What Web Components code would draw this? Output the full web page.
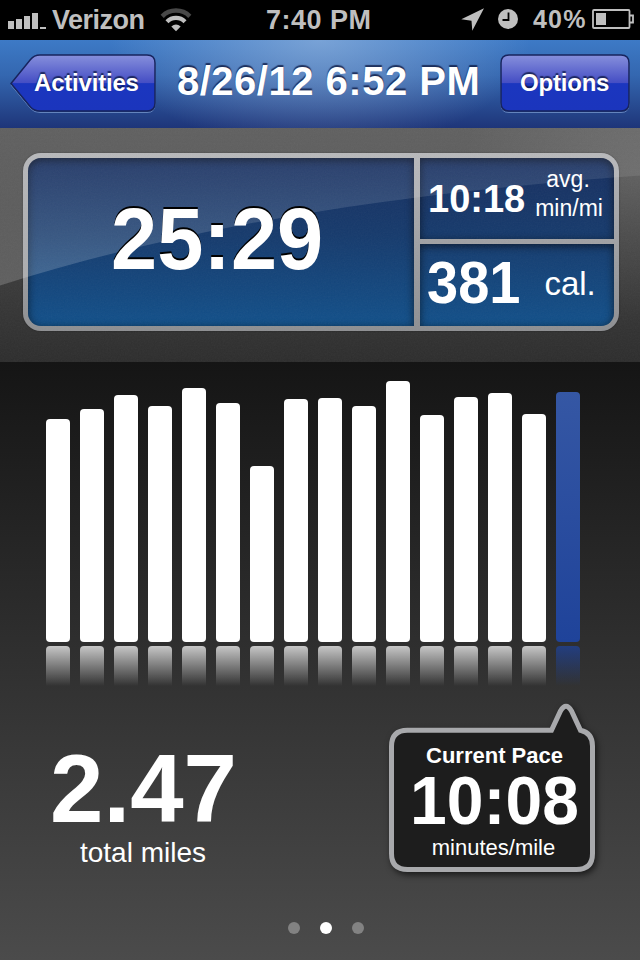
<!DOCTYPE html>
<html lang="en">
<head>
<meta charset="utf-8">
<title>Activity</title>
<style>
  body {
    margin: 0;
    width: 640px;
    height: 960px;
    overflow: hidden;
    background: #000;
    color: #fff;
    font-family: "Liberation Sans", Arial, sans-serif;
  }
</style>
</head>
<body>
<run-app></run-app>

<script>
const define = (name, html, setup) => {
  const template = document.createElement("template")
  template.innerHTML = html

  customElements.define(name, class extends HTMLElement {
    constructor() {
      super()
      this.attachShadow({mode: "open"})
      this.shadowRoot.appendChild(template.content.cloneNode(true))
    }

    connectedCallback() {
      if (setup) setup(this, this.shadowRoot)
    }
  })
}

// one line of text: size, letter spacing, offset from the line above, sideways nudge
// and a vertical stretch that keeps the baseline in place
define("text-line", `
  <style>
    :host {
      display: block;
      white-space: nowrap;
      line-height: 1;
      font-weight: bold;
      position: relative;
      z-index: 2;
      transform-origin: 50% 84.6%;
    }
    :host([light]) { font-weight: normal; }
    :host([engraved]) { text-shadow: 0 -2px 1px rgba(10,20,60,.75); }
    :host([deep]) { text-shadow: 0 -2px 0 #000; }
  </style>
  <slot></slot>
`, el => {
  el.style.fontSize = el.getAttribute("size") + "px"
  el.style.letterSpacing = (el.getAttribute("track") || 0) + "px"
  el.style.marginTop = (el.getAttribute("top") || 0) + "px"
  el.style.marginLeft = (el.getAttribute("left") || 0) + "px"
  if (el.hasAttribute("stretch")) el.style.transform = `scaleY(${el.getAttribute("stretch")})`
})

define("status-bar", `
  <style>
    :host {
      display: flex;
      align-items: flex-start;
      height: 40px;
      background: #000;
      color: #bfbfbf;
    }
    svg { display: block; flex: none; }
    .time { width: 184px; }
    .carrier { width: 105px; }
    .percent { width: 60px; }
  </style>
  <svg width="51" height="40" fill="#bfbfbf">
    <path d="M8 21h6v8h-6zM16 19h6v10h-6zM24 16h6v13h-6zM32 13h6v16h-6zM40 27h6v2h-6z"/>
  </svg>
  <div class="carrier"><text-line size="27" top="7" left="1" track="-.5">Verizon</text-line></div>
  <svg width="110" height="40" viewBox="156 0 110 40" fill="none">
    <path d="M162.200 16.300A19.500 19.500 0 0 1 189.800 16.300" stroke="#484848" stroke-width="4.500"/>
    <path d="M167 21.800A12.500 12.500 0 0 1 185 21.800" stroke="#bfbfbf" stroke-width="4.200"/>
    <path d="M171.300 26.500Q176 22.500 180.700 26.500L176 31.200Z" fill="#bfbfbf"/>
  </svg>
  <div class="time"><text-line size="27" top="7" left="0" track=".5">7:40 PM</text-line></div>
  <svg width="82" height="40" viewBox="450 0 82 40" fill="#bfbfbf">
    <path d="M484 8.300L461.300 19.300L471.500 20.700L472.300 30.700Z"/>
    <circle cx="508" cy="19" r="10"/>
    <path d="M508.500 12.500V20H502.500" fill="none" stroke="#000" stroke-width="1.800"/>
  </svg>
  <div class="percent"><text-line size="25" top="7" left="1" track="1.200">40%</text-line></div>
  <svg width="48" height="40" viewBox="592 0 48 40" fill="none" stroke="#bfbfbf" stroke-width="1.800">
    <rect x="593" y="10" width="36.500" height="18" rx="1"/>
    <path d="M629.500 15.500H633V22.500H629.500"/>
    <path d="M596 13h10v12h-10z" fill="#bfbfbf" stroke="none"/>
  </svg>
`)

define("nav-button", `
  <style>
    :host { display: block; flex: none; }
    .box { display: grid; }
    svg, ::slotted(*) { grid-area: 1 / 1; }
    svg { display: block; }
  </style>
  <div class="box">
    <svg height="62">
      <defs>
        <linearGradient id="fill" x2="0" y2="1">
          <stop offset="0" stop-color="#8790dc"/>
          <stop offset=".5" stop-color="#444dc4"/>
          <stop offset=".51" stop-color="#1b36bf"/>
          <stop offset="1" stop-color="#1b35bd"/>
        </linearGradient>
      </defs>
      <path class="lip" transform="translate(0 1.500)" fill="none" stroke="#8fb0e0" stroke-opacity=".6"/>
      <path class="face" fill="url(#fill)" stroke="#17245e" stroke-width="1.500"/>
    </svg>
    <slot></slot>
  </div>
`, (el, root) => {
  const back = el.hasAttribute("back")
  const w = back ? 146 : 130
  const d = back
    ? `M1 29.500L20.500 5.500Q24 1 30 1H${w - 9}Q${w - 1} 1 ${w - 1} 9V49Q${w - 1} 57 ${w - 9} 57H30Q24 57 20.500 53Z`
    : `M9 1H${w - 9}Q${w - 1} 1 ${w - 1} 9V49Q${w - 1} 57 ${w - 9} 57H9Q1 57 1 49V9Q1 1 9 1Z`
  root.querySelector("svg").setAttribute("width", w)
  root.querySelectorAll("path").forEach(p => p.setAttribute("d", d))
})

define("nav-bar", `
  <style>
    :host {
      display: flex;
      box-sizing: border-box;
      height: 88px;
      padding: 14px 10px 0;
      background:
        radial-gradient(ellipse 210px 110px at 50% 0, rgba(175,200,230,.52), transparent),
        linear-gradient(#3d7ac6, #3467b0 40%, #1e3579);
    }
    .title { flex: 1; }
  </style>
  <slot name="left"></slot>
  <div class="title"><slot></slot></div>
  <slot name="right"></slot>
`)

define("summary-panel", `
  <style>
    :host {
      display: block;
      box-sizing: border-box;
      height: 234px;
      padding: 25px 21px 0 23px;
      position: relative;
      background:
        radial-gradient(ellipse 180px 150px at 100% 20%, rgba(255,255,255,.1), transparent),
        linear-gradient(#585858, #444 40%, #2d2d2d);
    }
    .overlay {
      position: absolute;
      left: 0;
      top: 0;
      z-index: 1;
    }
    .frame {
      display: grid;
      grid-template: 81px 82px / 386px 194px;
      gap: 5px 6px;
      padding: 5px;
      border-radius: 18px;
      background: linear-gradient(#b2b3b6, #8e8f92);
      box-shadow: 0 0 2px rgba(0,0,0,.4);
    }
  </style>
  <svg class="overlay" width="640" height="234">
    <defs>
      <linearGradient id="shine" gradientUnits="userSpaceOnUse" x2="0" y2="158">
        <stop offset="0" stop-color="#fff" stop-opacity=".05"/>
        <stop offset="1" stop-color="#fff" stop-opacity=".19"/>
      </linearGradient>
      <filter id="grain" x="0" y="0" width="100%" height="100%">
        <feTurbulence type="fractalNoise" baseFrequency=".7" numOctaves="2"/>
        <feColorMatrix type="saturate" values="0"/>
      </filter>
    </defs>
    <rect width="640" height="234" filter="url(#grain)" opacity=".05"/>
    <path fill="url(#shine)" d="M0 0H640V47.500C400 65 190 97 0 157.500Z"/>
  </svg>
  <div class="frame"><slot></slot></div>
`)

define("stat-cell", `
  <style>
    :host {
      display: flex;
      align-items: flex-start;
      overflow: hidden;
      background: linear-gradient(#182f60, #163a6c 45%, #12508a) 0 var(--shift, 0) / 100% 168px;
      box-shadow: inset 0 2px 8px rgba(0,0,0,.6);
    }
    :host([main]) {
      grid-row: span 2;
      border-radius: 13px 0 0 13px;
    }
    :host([upper]) { border-top-right-radius: 13px; }
    :host([lower]) {
      --shift: -86px;
      border-bottom-right-radius: 13px;
    }
  </style>
  <slot></slot>
`)

define("pace-chart", `
  <style>
    :host {
      display: flex;
      align-items: flex-end;
      gap: 10px;
      height: 324px;
      padding-left: 46px;
    }
    .bar {
      width: 24px;
      --ink: #fff;
      --fade: linear-gradient(rgba(255,255,255,.73), rgba(255,255,255,0));
    }
    .bar.now {
      --ink: linear-gradient(#3557a4, #1f439a);
      --fade: linear-gradient(rgba(31,67,154,.75), rgba(31,67,154,0));
    }
    .value {
      border-radius: 4px;
      background: var(--ink);
    }
    .mirror {
      height: 40px;
      margin-top: 4px;
      border-radius: 4px 4px 0 0;
      background: var(--fade);
    }
  </style>
`, (el, root) => {
  const values = el.getAttribute("values").split(" ")
  values.forEach((v, i) => {
    const bar = document.createElement("div")
    bar.className = i === values.length - 1 ? "bar now" : "bar"
    bar.innerHTML = `<div class="value" style="height:${v}px"></div><div class="mirror"></div>`
    root.appendChild(bar)
  })
})

define("pace-bubble", `
  <style>
    :host {
      display: block;
      position: relative;
      width: 206px;
      height: 144px;
      text-align: center;
    }
    svg {
      position: absolute;
      left: -14px;
      top: -33px;
      filter: drop-shadow(2px 3px 3px rgba(0,0,0,.6));
    }
  </style>
  <svg width="235" height="192" viewBox="375 695 235 192">
    <path fill="#1d1d1d" stroke="#a8a9ac" stroke-width="5"
      d="M407.500 730.300H551.500L560.500 711Q566 701.500 571.500 711L580.500 730.300Q592.500 733 592.500 746V853.500Q592.500 869.500 576.500 869.500H407.500Q391.500 869.500 391.500 853.500V746.300Q391.500 730.300 407.500 730.300Z"/>
  </svg>
  <slot></slot>
`)

define("page-dots", `
  <style>
    :host {
      display: flex;
      justify-content: center;
      gap: 20px;
      padding-left: 12px;
    }
    i {
      width: 12px;
      height: 12px;
      border-radius: 50%;
      background: #828282;
    }
    .on { background: #fff; }
  </style>
  <i></i><i class="on"></i><i></i>
`)

define("run-app", `
  <style>
    :host { display: block; }
    .detail {
      display: flex;
      flex-direction: column;
      height: 598px;
      background: linear-gradient(#151515, #4b4b4b);
    }
    .totals {
      display: flex;
      justify-content: space-between;
      height: 194px;
      padding: 42px 45px 0 43px;
    }
    .distance {
      width: 200px;
      text-align: center;
    }
    .units { text-align: center; }
  </style>
  <status-bar></status-bar>
  <nav-bar>
    <nav-button slot="left" back><text-line engraved size="24" top="17" left="24" track="-.2">Activities</text-line></nav-button>
    <text-line engraved size="40" top="7" left="21" track=".5">8/26/12 6:52 PM</text-line>
    <nav-button slot="right"><text-line engraved size="24" top="17" left="20" track="-.2">Options</text-line></nav-button>
  </nav-bar>
  <summary-panel>
    <stat-cell main><text-line deep size="83" top="41" left="83" stretch="1.040">25:29</text-line></stat-cell>
    <stat-cell upper>
      <text-line size="38" top="22" left="8">10:18</text-line>
      <div class="units">
        <text-line light size="23" top="10" left="8">avg.</text-line>
        <text-line light size="23" top="6" left="10">min/mi</text-line>
      </div>
    </stat-cell>
    <stat-cell lower>
      <text-line size="56" top="12" left="7" stretch="1.050">381</text-line>
      <text-line light size="33" top="23" left="24">cal.</text-line>
    </stat-cell>
  </summary-panel>
  <div class="detail">
    <pace-chart values="223 233.500 247.500 236 254 239.500 176 243.500 244 236 261 227 245 249 228 250"></pace-chart>
    <div class="totals">
      <div class="distance">
        <text-line size="96" top="13" left="1">2.47</text-line>
        <text-line light size="28" top="2">total miles</text-line>
      </div>
      <pace-bubble>
        <text-line size="22" top="17" left="5">Current Pace</text-line>
        <text-line size="66" top="1" left="5" stretch="1.040">10:08</text-line>
        <text-line light size="22" top="3" left="3">minutes/mile</text-line>
      </pace-bubble>
    </div>
    <page-dots></page-dots>
  </div>
`)
</script>
</body>
</html>
